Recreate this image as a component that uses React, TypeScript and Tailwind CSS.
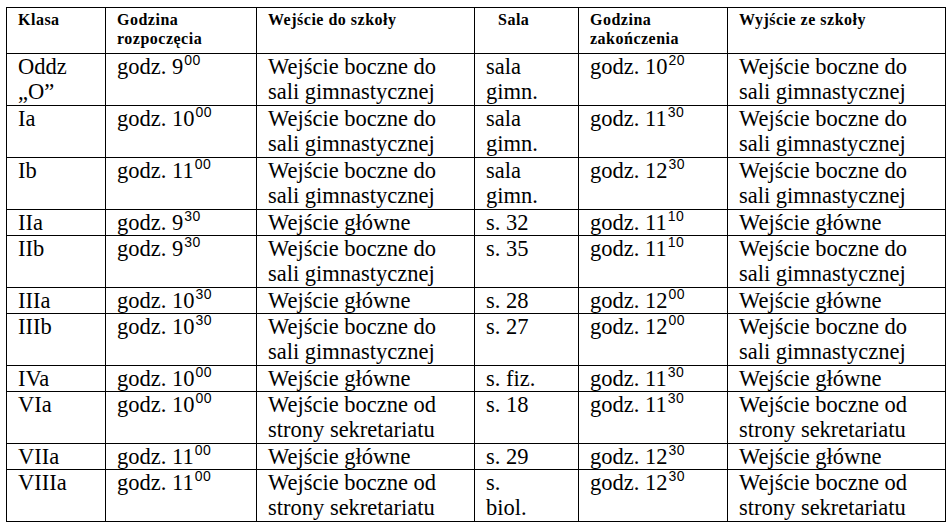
type Row = {
  klasa: string[];
  start: [string, string];
  wejscie: string[];
  sala: string[];
  end: [string, string];
  wyjscie: string[];
};

const BOCZNE_SALA = ["Wejście boczne do", "sali gimnastycznej"];
const BOCZNE_SEKR = ["Wejście boczne od", "strony sekretariatu"];
const GLOWNE = ["Wejście główne"];

const ROWS: Row[] = [
  { klasa: ["Oddz", "„O”"], start: ["9", "00"], wejscie: BOCZNE_SALA, sala: ["sala", "gimn."], end: ["10", "20"], wyjscie: BOCZNE_SALA },
  { klasa: ["Ia"], start: ["10", "00"], wejscie: BOCZNE_SALA, sala: ["sala", "gimn."], end: ["11", "30"], wyjscie: BOCZNE_SALA },
  { klasa: ["Ib"], start: ["11", "00"], wejscie: BOCZNE_SALA, sala: ["sala", "gimn."], end: ["12", "30"], wyjscie: BOCZNE_SALA },
  { klasa: ["IIa"], start: ["9", "30"], wejscie: GLOWNE, sala: ["s. 32"], end: ["11", "10"], wyjscie: GLOWNE },
  { klasa: ["IIb"], start: ["9", "30"], wejscie: BOCZNE_SALA, sala: ["s. 35"], end: ["11", "10"], wyjscie: BOCZNE_SALA },
  { klasa: ["IIIa"], start: ["10", "30"], wejscie: GLOWNE, sala: ["s. 28"], end: ["12", "00"], wyjscie: GLOWNE },
  { klasa: ["IIIb"], start: ["10", "30"], wejscie: BOCZNE_SALA, sala: ["s. 27"], end: ["12", "00"], wyjscie: BOCZNE_SALA },
  { klasa: ["IVa"], start: ["10", "00"], wejscie: GLOWNE, sala: ["s. fiz."], end: ["11", "30"], wyjscie: GLOWNE },
  { klasa: ["VIa"], start: ["10", "00"], wejscie: BOCZNE_SEKR, sala: ["s. 18"], end: ["11", "30"], wyjscie: BOCZNE_SEKR },
  { klasa: ["VIIa"], start: ["11", "00"], wejscie: GLOWNE, sala: ["s. 29"], end: ["12", "30"], wyjscie: GLOWNE },
  { klasa: ["VIIIa"], start: ["11", "00"], wejscie: BOCZNE_SEKR, sala: ["s.", "biol."], end: ["12", "30"], wyjscie: BOCZNE_SEKR },
];

function Lines({ lines }: { lines: string[] }) {
  return (
    <>
      {lines.map((l, i) => (
        <div key={i} className="whitespace-nowrap">
          {l}
        </div>
      ))}
    </>
  );
}

function Godz({ t }: { t: [string, string] }) {
  return (
    <div className="whitespace-nowrap">
      godz. {t[0]}
      <span className="relative -top-[9px] ml-[1px] font-['Liberation_Sans'] text-[14px] leading-[14px] tracking-[0.5px]">
        {t[1]}
      </span>
    </div>
  );
}

const td = "border border-black align-top p-0 pl-[11px] font-['Liberation_Serif'] text-[22.5px] leading-[25px] text-black";
const th = "border border-black align-top p-0 pl-[11px] pt-[2px] text-left font-['Liberation_Serif'] font-bold text-[16px] tracking-[0.5px] leading-[19px] text-black";

export default function App() {
  const twoLine = (r: Row) => r.wejscie.length > 1 || r.klasa.length > 1 || r.sala.length > 1;

  return (
    <div className="w-[951px] h-[531px] bg-white pl-[6px] pt-[7px] text-black font-['Liberation_Serif']">
      <table className="table-fixed border-collapse w-[939px]">
        <colgroup>
          <col className="w-[99px]" />
          <col className="w-[151px]" />
          <col className="w-[218px]" />
          <col className="w-[104px]" />
          <col className="w-[149px]" />
          <col className="w-[218px]" />
        </colgroup>
        <thead>
          <tr className="h-[46px]">
            <th className={th}>Klasa</th>
            <th className={th}>
              Godzina
              <br />
              rozpoczęcia
            </th>
            <th className={th}>Wejście do szkoły</th>
            <th className={`${th} pl-[23px]`}>Sala</th>
            <th className={th}>
              Godzina
              <br />
              zakończenia
            </th>
            <th className={th}>Wyjście ze szkoły</th>
          </tr>
        </thead>
        <tbody>
          {ROWS.map((r, i) => (
            <tr key={i} className={twoLine(r) ? "h-[52px]" : "h-[26px]"}>
              <td className={td}>
                <Lines lines={r.klasa} />
              </td>
              <td className={td}>
                <Godz t={r.start} />
              </td>
              <td className={td}>
                <Lines lines={r.wejscie} />
              </td>
              <td className={`${td} pl-[9px]`}>
                <Lines lines={r.sala} />
              </td>
              <td className={td}>
                <Godz t={r.end} />
              </td>
              <td className={td}>
                <Lines lines={r.wyjscie} />
              </td>
            </tr>
          ))}
        </tbody>
      </table>
    </div>
  );
}
